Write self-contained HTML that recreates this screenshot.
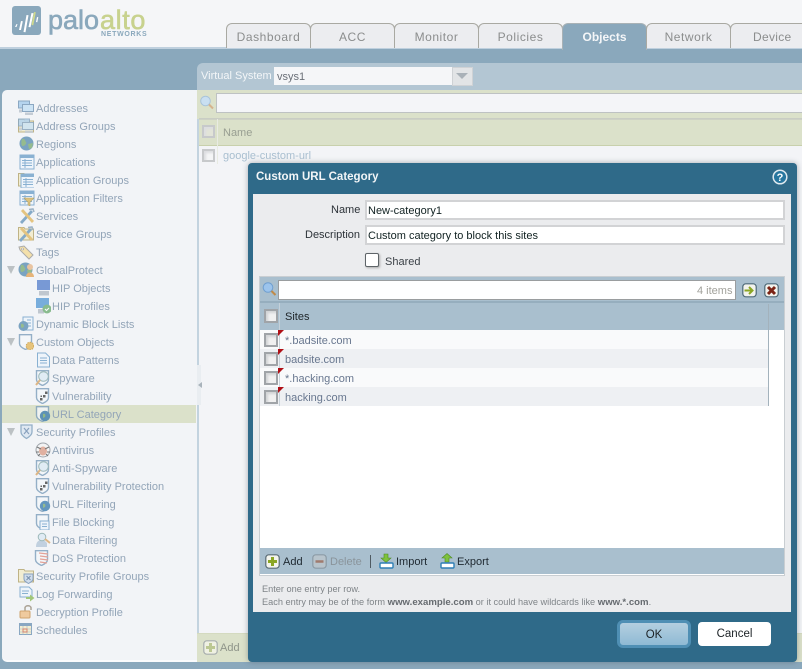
<!DOCTYPE html>
<html><head><meta charset="utf-8"><title>Custom URL Category</title>
<style>
html,body{margin:0;padding:0}
body{width:802px;height:669px;overflow:hidden;position:relative;background:#b2c5d2;font-family:"Liberation Sans",sans-serif;font-size:11px}
div,span,svg{position:absolute;box-sizing:border-box}
b{font-size:9.6px}
.t{white-space:nowrap;line-height:16px}
.tab{top:23px;width:85px;height:25px;background:#ecedf0;border:1px solid #a9a9a2;border-bottom:none;border-radius:6px 6px 0 0;text-align:center;color:#8b8d8d;font-size:12px;letter-spacing:.55px;line-height:27px}
.s{color:#93a5b8;left:36px}
.l2{left:52px}
.i{width:16px;height:16px;opacity:.8}
.cb{width:13px;height:13px;background:#f4f5f6;border:2px solid #c7c9cb;box-shadow:inset 2px 2px 2px #dcdde0}
.cbd{width:14px;height:14px;background:#f0f0f0;border:2px solid #a0a4a8;box-shadow:inset 2px 2px 2px #d2d4d6}
.inp{background:#fff;border:2px solid #d2d3d5;height:20px;left:365px;width:420px;color:#122;padding-left:1px;line-height:19px;font-size:11px}
.row{left:260px;width:508px;height:19px}
.site{left:285px;color:#68778f;font-size:11px}
.flag{left:278px;width:0;height:0;border-top:6px solid #b01016;border-right:6px solid transparent}
</style></head><body>
<svg width="0" height="0" style="position:absolute">
<symbol id="sh" viewBox="0 0 16 16"><path d="M1.500 .7h12v8.800c0 3-3.300 4.800-6 6-2.700-1.200-6-3-6-6z" fill="#f4f7fa" stroke="#7d9fbc" stroke-width="1.400"/></symbol>
<symbol id="folder" viewBox="0 0 16 16"><path d="M.500 14V1.500h5.500l1 1.500h8.500v11z" fill="#f3ecca" stroke="#b3a36a"/></symbol>
<symbol id="pc" viewBox="0 0 16 16"><rect x=".5" y="1" width="11" height="7" fill="#a6cdec" stroke="#7295b5"/><rect x="4.500" y="4.500" width="11" height="7" fill="#c3e0f4" stroke="#7295b5"/><rect x="7" y="12.500" width="8" height="2.500" fill="#b9c3cd"/><rect x="1" y="9.500" width="3" height="3" fill="#b9c3cd"/></symbol>
<symbol id="globe" viewBox="0 0 16 16"><circle cx="7.500" cy="7.500" r="7" fill="#5d8fb4"/><path d="M3 3c3-1 3 2 4 3s-1 4-3 4-2-4-1-7zM9 8l5-1-1 5-3 1z" fill="#7fae74"/></symbol>
<symbol id="table" viewBox="0 0 16 16"><rect x="1" y="1" width="14" height="14" fill="#eef5fb" stroke="#6fa1c9"/><rect x="1" y="1" width="14" height="3" fill="#6fa1c9"/><path d="M3 6.500h10M3 9h10M3 11.500h10M6 5v9" stroke="#6fa1c9" fill="none"/></symbol>
<symbol id="tools" viewBox="0 0 16 16"><path d="M2 15 13 3" stroke="#6b98bd" stroke-width="2.800"/><path d="M3 2l11 12" stroke="#e1b964" stroke-width="2.800"/><path d="M10 1.500l4-.5 1 3" stroke="#88a3ba" fill="none" stroke-width="1.500"/></symbol>
<symbol id="add" viewBox="0 0 15 15"><rect x=".8" y=".8" width="13.400" height="13.400" rx="3" fill="#f3f4ed" stroke="#5c6d76" stroke-width="1.200"/><path d="M7.500 3v9M3 7.500h9" stroke="#8ba624" stroke-width="3"/></symbol>
</svg>

<!-- header -->
<div style="left:0;top:0;width:802px;height:47px;background:#f5f6f8"></div>
<div style="left:0;top:47px;width:802px;height:3px;background:#bfd0de"></div>
<div style="left:0;top:49px;width:802px;height:620px;background:#8aa8bc"></div>
<!-- logo -->
<svg style="left:12px;top:6px" width="29" height="29" viewBox="0 0 29 29"><rect width="29" height="29" rx="3" fill="#8aa8bc"/><path d="M3 21l1.500-3 1 .3L4.500 21zM7 24l2-9 1.800.3L9 24zM11.500 26l3-17 2 .3-3 17zM16.500 21l3-14 2 .3-3 14z" fill="#fff"/><path d="M19.500 19l2.500-13 1.800.3-2.500 13z" fill="#cfd98c"/><path d="M24 16l1-5 1.300.3-1 5z" fill="#fff"/></svg>
<div class="t" style="left:48px;top:6px;font-size:27px;line-height:28px;color:#8aa8bc;-webkit-text-stroke:.6px #8aa8bc">palo</div>
<div class="t" style="left:100px;top:6px;font-size:27px;line-height:28px;color:#c8d28e;letter-spacing:.6px;-webkit-text-stroke:.6px #c8d28e">alto</div>
<div class="t" style="left:101px;top:30px;font-size:7px;font-weight:bold;color:#8aa8bc;letter-spacing:.7px;line-height:10px">NETWORKS</div>
<!-- tabs -->
<div class="tab" style="left:226px">Dashboard</div>
<div class="tab" style="left:310px">ACC</div>
<div class="tab" style="left:394px">Monitor</div>
<div class="tab" style="left:478px">Policies</div>
<div class="tab" style="left:562px;height:27px;background:#8aa8bc;color:#f4f6f8;font-weight:bold;font-size:12px;letter-spacing:0;border-color:#a9b2b6">Objects</div>
<div class="tab" style="left:646px">Network</div>
<div class="tab" style="left:730px;width:80px;text-align:left;padding-left:22px;letter-spacing:.3px">Device</div>

<!-- vsys bar -->
<div style="left:197px;top:63px;width:605px;height:28px;background:#b3c6d3;border-radius:6px 0 0 0"></div>
<div class="t" style="left:201px;top:68px;color:#f3f6f8;font-size:11px">Virtual System</div>
<div style="left:274px;top:67px;width:178px;height:18px;background:#f5f6f8"></div>
<div class="t" style="left:277px;top:69px;color:#6b7078">vsys1</div>
<div style="left:452px;top:67px;width:21px;height:19px;background:#e2e4e6;border:1px solid #cfd2d5"></div>
<div style="left:456px;top:73px;width:0;height:0;border-left:6px solid transparent;border-right:6px solid transparent;border-top:6px solid #a9b1b8"></div>

<!-- sidebar -->
<div style="left:2px;top:90px;width:195px;height:572px;background:#f2f4f7;border-radius:5px 0 0 5px;border-bottom:2px solid #fafbfc"></div>
<div style="left:197px;top:90px;width:2px;height:572px;background:#c3d3df"></div>
<div style="left:2px;top:405px;width:194px;height:18px;background:#dbe1ca"></div>

<svg class="i" style="left:18px;top:100px"><use href="#pc"/></svg><div class="t s" style="top:101px">Addresses</div>
<svg class="i" style="left:18px;top:118px"><use href="#folder"/><use href="#pc" opacity=".85"/></svg><div class="t s" style="top:119px">Address Groups</div>
<svg class="i" style="left:19px;top:136px"><use href="#globe"/></svg><div class="t s" style="top:137px">Regions</div>
<svg class="i" style="left:19px;top:154px"><use href="#table"/></svg><div class="t s" style="top:155px">Applications</div>
<svg class="i" style="left:18px;top:172px"><use href="#folder"/><use href="#table" x="2" y="1"/></svg><div class="t s" style="top:173px">Application Groups</div>
<svg class="i" style="left:19px;top:190px"><use href="#table"/><path d="M5 8h10l-4 4v4l-2-1v-3z" fill="#d8b862" stroke="#a78d45" stroke-width=".6"/></svg><div class="t s" style="top:191px">Application Filters</div>
<svg class="i" style="left:19px;top:208px"><use href="#tools"/></svg><div class="t s" style="top:209px">Services</div>
<svg class="i" style="left:18px;top:226px"><use href="#folder"/><use href="#tools"/></svg><div class="t s" style="top:227px">Service Groups</div>
<svg class="i" style="left:18px;top:244px"><path d="M1 3l5-1 9 9-4 4-9-9z" fill="#f5dc98" stroke="#999" /><circle cx="4.500" cy="5" r="1" fill="#fff" stroke="#888" stroke-width=".6"/></svg><div class="t s" style="top:245px">Tags</div>
<div style="left:7px;top:266px;width:0;height:0;border-left:4.500px solid transparent;border-right:4.500px solid transparent;border-top:8px solid #bcc1c4"></div>
<svg class="i" style="left:18px;top:262px"><use href="#globe"/><circle cx="12" cy="5" r="3" fill="#e8b98c"/><path d="M8 15c0-6 8-6 8 0z" fill="#e4a55a"/></svg><div class="t s" style="top:263px">GlobalProtect</div>
<svg class="i" style="left:36px;top:280px"><rect x="1" y="0" width="13" height="10" fill="#5a83cd"/><rect x="3" y="11" width="10" height="4.500" fill="#b4bcc6"/></svg><div class="t s l2" style="top:281px">HIP Objects</div>
<svg class="i" style="left:35px;top:298px"><rect x="1" y="0" width="13" height="10" fill="#5a9cd6"/><rect x="3" y="11" width="6" height="4.500" fill="#b4bcc6"/><circle cx="12" cy="11" r="4.500" fill="#6fae75"/><path d="M10 11l1.500 1.500L14 10" stroke="#fff" fill="none"/></svg><div class="t s l2" style="top:299px">HIP Profiles</div>
<svg class="i" style="left:18px;top:316px"><rect x="5" y="1" width="10" height="13" fill="#eef5fb" stroke="#6fa1c9"/><path d="M9 4h4M9 7h4M9 10h4" stroke="#6fa1c9"/><circle cx="5.500" cy="10" r="5" fill="#5d8fb4"/><path d="M3 8c2-1 3 1 3 2s-2 3-3 1z" fill="#7fae74"/></svg><div class="t s" style="top:317px">Dynamic Block Lists</div>
<div style="left:7px;top:338px;width:0;height:0;border-left:4.500px solid transparent;border-right:4.500px solid transparent;border-top:8px solid #bcc1c4"></div>
<svg class="i" style="left:18px;top:334px"><use href="#sh"/><circle cx="12" cy="12" r="3.800" fill="#e4b75d" stroke="#c59535" stroke-dasharray="1.500 1"/></svg><div class="t s" style="top:335px">Custom Objects</div>
<svg class="i" style="left:36px;top:352px"><path d="M1.500 1h8l4 4v10h-12z" fill="#eef5fb" stroke="#6fa1c9"/><path d="M4 6h7M4 8.500h7M4 11h7" stroke="#6fa1c9"/></svg><div class="t s l2" style="top:353px">Data Patterns</div>
<svg class="i" style="left:35px;top:370px"><use href="#sh"/><circle cx="8.500" cy="6.500" r="4.800" fill="#dce9f4" stroke="#8aa"/><path d="M5 10 1 15" stroke="#d9a76a" stroke-width="2"/></svg><div class="t s l2" style="top:371px">Spyware</div>
<svg class="i" style="left:35px;top:388px"><use href="#sh"/><path d="M5 10h2.500v2.500H5zM8 7h2.500v2.500H8zM10 3.500h2.500V6H10zM5.500 7.500h1.500V9H5.500z" fill="#444"/></svg><div class="t s l2" style="top:389px">Vulnerability</div>
<svg class="i" style="left:35px;top:406px"><use href="#sh"/><circle cx="10" cy="10" r="5.200" fill="#3f7fb0"/><path d="M8 8c2-1 3 1 2 3l-2 1z" fill="#7fae74"/></svg><div class="t s l2" style="top:407px">URL Category</div>
<div style="left:7px;top:428px;width:0;height:0;border-left:4.500px solid transparent;border-right:4.500px solid transparent;border-top:8px solid #bcc1c4"></div>
<svg class="i" style="left:19px;top:424px"><path d="M2 1h11v7c0 3-3 5-5.500 6.500C5 13 2 11 2 8z" fill="#dbe6f2" stroke="#7d9fbc" stroke-width="1.300"/><path d="M5 4l5 6M10 4l-5 6" stroke="#6f8db0" stroke-width="1.200"/></svg><div class="t s" style="top:425px">Security Profiles</div>
<svg class="i" style="left:35px;top:442px"><circle cx="8" cy="8" r="7" fill="#f2f3f4" stroke="#8b9299"/><ellipse cx="8" cy="9" rx="4" ry="4.500" fill="#dca08b"/><path d="M2 5l4 2M14 5l-4 2M1 10h3M15 10h-3M3 14l2-2M13 14l-2-2" stroke="#555"/></svg><div class="t s l2" style="top:443px">Antivirus</div>
<svg class="i" style="left:35px;top:460px"><use href="#sh"/><circle cx="8.500" cy="6.500" r="4.800" fill="#dce9f4" stroke="#8aa"/><path d="M5 10 1 15" stroke="#d9a76a" stroke-width="2"/></svg><div class="t s l2" style="top:461px">Anti-Spyware</div>
<svg class="i" style="left:35px;top:478px"><use href="#sh"/><path d="M5 10h2.500v2.500H5zM8 7h2.500v2.500H8zM10 3.500h2.500V6H10zM5.500 7.500h1.500V9H5.500z" fill="#444"/></svg><div class="t s l2" style="top:479px">Vulnerability Protection</div>
<svg class="i" style="left:35px;top:496px"><use href="#sh"/><circle cx="10" cy="10" r="5.200" fill="#3f7fb0"/><path d="M8 8c2-1 3 1 2 3l-2 1z" fill="#7fae74"/></svg><div class="t s l2" style="top:497px">URL Filtering</div>
<svg class="i" style="left:35px;top:514px"><use href="#sh"/><rect x="5" y="7" width="9" height="9" fill="#eef5fb" stroke="#6fa1c9"/><path d="M7 10h5M7 12.500h5" stroke="#6fa1c9"/></svg><div class="t s l2" style="top:515px">File Blocking</div>
<svg class="i" style="left:35px;top:532px"><path d="M1 15c0-5 2-6 4-7h4l3 3v4z" fill="#b6c8da"/><circle cx="7" cy="5" r="3.800" fill="#dce9f4" stroke="#8aa"/><path d="M10 7l5 4" stroke="#d9a76a" stroke-width="2"/></svg><div class="t s l2" style="top:533px">Data Filtering</div>
<svg class="i" style="left:34px;top:550px"><use href="#sh"/><path d="M5 3l9 1M6 6l8 1M6 9l8 1M6 12l7 1" stroke="#e08e80" stroke-width="1.200"/></svg><div class="t s l2" style="top:551px">DoS Protection</div>
<svg class="i" style="left:18px;top:568px"><use href="#folder"/><path d="M6 6h9v5c0 2-2 3-4.500 4.500C8 14 6 13 6 11z" fill="#c8d8ea" stroke="#6f8db0"/><path d="M8.500 8l4 4M12.500 8l-4 4" stroke="#5a789c"/></svg><div class="t s" style="top:569px">Security Profile Groups</div>
<svg class="i" style="left:19px;top:586px"><path d="M1 1h9l3 3v7H1z" fill="#eef5fb" stroke="#6fa1c9"/><path d="M3 5h7M3 7.500h6" stroke="#6fa1c9"/><path d="M7 11h4V8.500l4.500 3.500-4.500 3.500V13H7z" fill="#8fbc5c"/></svg><div class="t s" style="top:587px">Log Forwarding</div>
<svg class="i" style="left:19px;top:604px"><path d="M6 7V4c0-3 6-3 6 0v2" fill="none" stroke="#9a8f7e" stroke-width="1.500"/><rect x="1" y="7" width="10" height="7" rx="1" fill="#efc088" stroke="#c78f4d"/></svg><div class="t s" style="top:605px">Decryption Profile</div>
<svg class="i" style="left:19px;top:623px" width="14" height="13"><rect x=".5" y=".5" width="12" height="11" fill="#f4ecc8" stroke="#6f94b5"/><rect x=".5" y=".5" width="12" height="2.500" fill="#6f94b5"/><path d="M.5 6h12M.5 9h12M4 3v9M8 3v9" stroke="#8aa8c0" stroke-width=".6" fill="none"/><rect x="4" y="6" width="4" height="3" fill="#efe7c6" stroke="#d06a50"/></svg><div class="t s" style="top:623px">Schedules</div>

<!-- right panel -->
<div style="left:199px;top:90px;width:603px;height:572px;background:#f3f4f7"></div>
<div style="left:197px;top:365px;width:4px;height:40px;background:#e9edf1"></div>
<div style="left:198px;top:382px;width:0;height:0;border-top:3px solid transparent;border-bottom:3px solid transparent;border-right:4px solid #a9b3bb"></div>
<div style="left:197px;top:90px;width:605px;height:3px;background:#dbe1ca"></div>
<div style="left:197px;top:93px;width:605px;height:26px;background:#dbe1ca"></div>
<div style="left:216px;top:93px;width:586px;height:20px;background:#f4f5f8;border:1px solid #bec2c3;border-right:none"></div>
<svg style="left:199px;top:95px" width="16" height="16"><circle cx="6.500" cy="6" r="4.800" fill="#c9dff1" stroke="#a9c4da"/><path d="M10 9.500l4 4" stroke="#d5b38d" stroke-width="2"/></svg>
<div style="left:199px;top:118px;width:603px;height:2px;background:#c9cdc4"></div>
<div style="left:199px;top:119px;width:603px;height:27px;background:#dbe1ca;border-bottom:1px solid #c8d0ac;border-top:1px solid #ced2c5"></div>
<div style="left:217px;top:119px;width:1px;height:45px;background:#e8ebe2"></div>
<div class="cb" style="left:202px;top:125px;background:#e2e4d8"></div>
<div class="t" style="left:223px;top:125px;color:#989e92">Name</div>
<div class="cb" style="left:202px;top:149px"></div>
<div class="t" style="left:223px;top:148px;color:#a9bfd0">google-custom-url</div>
<div style="left:197px;top:633px;width:605px;height:29px;background:#dbe1ca;border-top:1px solid #d4dac0"></div>
<svg style="left:203px;top:640px" width="15" height="15"><rect x=".8" y=".8" width="13.400" height="13.400" rx="3" fill="#eff1e2" stroke="#a7adae" stroke-width="1.200"/><path d="M7.500 3v9M3 7.500h9" stroke="#bcc892" stroke-width="3"/></svg>
<div class="t" style="left:220px;top:640px;color:#8f958a">Add</div>

<!-- dialog -->
<div style="left:248px;top:163px;width:549px;height:499px;background:#2f6a89;border-radius:4px;box-shadow:0 0 6px rgba(70,80,90,.45)"></div>
<div class="t" style="left:256px;top:169px;color:#f2f5f7;font-weight:bold;font-size:11.5px">Custom URL Category</div>
<svg style="left:772px;top:169px" width="16" height="16"><circle cx="8" cy="8" r="6.800" fill="#27769f" stroke="#dfe9ef" stroke-width="1.500"/><text x="8" y="12" text-anchor="middle" font-size="11" font-weight="bold" fill="#fff" font-family="Liberation Sans">?</text></svg>
<div style="left:253px;top:194px;width:538px;height:418px;background:#ebecee"></div>
<div class="t" style="left:331px;top:202px;color:#2c3238">Name</div>
<div class="inp t" style="top:200px">New-category1</div>
<div class="t" style="left:305px;top:227px;color:#2c3238">Description</div>
<div class="inp t" style="top:225px">Custom category to block this sites</div>
<div style="left:365px;top:253px;width:14px;height:14px;background:#fff;border:1px solid #5e6468;border-radius:2px;box-shadow:1px 1px 2px #aaa"></div>
<div class="t" style="left:385px;top:254px;color:#3c4248">Shared</div>

<!-- grid -->
<div style="left:259px;top:276px;width:526px;height:300px;background:#fff;border:1px solid #c9ced2"></div>
<div style="left:260px;top:277px;width:524px;height:26px;background:#a9bfce;border-bottom:2px solid #96aebe"></div>
<svg style="left:262px;top:282px" width="16" height="16"><circle cx="6" cy="5.500" r="4.800" fill="#9cc4ec" stroke="#6f9fd0"/><path d="M9.500 9l4 4" stroke="#c08a48" stroke-width="2"/></svg>
<div style="left:278px;top:280px;width:458px;height:20px;background:#fff;border:1px solid #9a9d9f"></div>
<div class="t" style="left:697px;top:283px;color:#a1a19b">4 items</div>
<svg style="left:742px;top:283px" width="15" height="15"><rect x=".8" y=".8" width="13.400" height="13" rx="3" fill="#f2f3ed" stroke="#4e6a78" stroke-width="1.200"/><path d="M2.500 7.500h7M7 4l3.500 3.500L7 11" stroke="#8ba624" stroke-width="2" fill="none"/></svg>
<svg style="left:764px;top:283px" width="15" height="15"><rect x=".8" y=".8" width="13.400" height="13" rx="3" fill="#f2f3ed" stroke="#4e6a78" stroke-width="1.200"/><path d="M4 4l7 7M11 4l-7 7" stroke="#7c2415" stroke-width="3"/></svg>

<div style="left:260px;top:303px;width:524px;height:27px;background:#a9bfce"></div>
<div style="left:279px;top:303px;width:1px;height:103px;background:#c4d0d9"></div>
<div class="cbd" style="left:264px;top:309px"></div>
<div class="t" style="left:285px;top:309px;color:#1d2428">Sites</div>

<div class="row" style="top:330px;background:#f9fafb"></div>
<div class="row" style="top:349px;background:#eef0f3"></div>
<div class="row" style="top:368px;background:#f9fafb"></div>
<div class="row" style="top:387px;background:#eef0f3"></div>
<div style="left:279px;top:330px;width:1px;height:76px;background:#c9d3da"></div>
<div style="left:768px;top:304px;width:1px;height:102px;background:#a3b2bc"></div>
<div class="cbd" style="left:264px;top:333px"></div><div class="flag" style="top:330px"></div><div class="t site" style="top:333px">*.badsite.com</div>
<div class="cbd" style="left:264px;top:352px"></div><div class="flag" style="top:349px"></div><div class="t site" style="top:352px">badsite.com</div>
<div class="cbd" style="left:264px;top:371px"></div><div class="flag" style="top:368px"></div><div class="t site" style="top:371px">*.hacking.com</div>
<div class="cbd" style="left:264px;top:390px"></div><div class="flag" style="top:387px"></div><div class="t site" style="top:390px">hacking.com</div>

<div style="left:260px;top:548px;width:524px;height:26px;background:#a9bfce"></div>
<svg style="left:265px;top:554px" width="15" height="15"><use href="#add"/></svg>
<div class="t" style="left:283px;top:554px;color:#1e2830">Add</div>
<svg style="left:312px;top:554px" width="15" height="15"><rect x=".8" y=".8" width="13.400" height="13.400" rx="3" fill="#b8c4cc" stroke="#8c9ba6" stroke-width="1.200"/><path d="M3.500 7.500h8" stroke="#a07b6e" stroke-width="2.500"/></svg>
<div class="t" style="left:330px;top:554px;color:#8a949b">Delete</div>
<div style="left:370px;top:555px;width:1px;height:13px;background:#4f5a62"></div>
<svg style="left:379px;top:553px" width="15" height="16"><path d="M5 1h4v4h3L7 9.500 2 5h3z" fill="#7fc23c" stroke="#4d8a20" stroke-width=".6"/><rect x="1" y="10" width="13" height="5" rx="1" fill="#fff" stroke="#2f7fb5" stroke-width="1.400"/></svg>
<div class="t" style="left:396px;top:554px;color:#1e2830">Import</div>
<svg style="left:440px;top:553px" width="15" height="16"><path d="M7 .5 12 5H9v4H5V5H2z" fill="#7fc23c" stroke="#4d8a20" stroke-width=".6"/><rect x="1" y="10" width="13" height="5" rx="1" fill="#fff" stroke="#2f7fb5" stroke-width="1.400"/></svg>
<div class="t" style="left:457px;top:554px;color:#1e2830">Export</div>

<div class="t" style="left:262px;top:581px;color:#7f8488;font-size:9.2px">Enter one entry per row.</div>
<div class="t" style="left:262px;top:594px;color:#7f8488;font-size:9.2px">Each entry may be of the form <b style="color:#666b70">www.example.com</b> or it could have wildcards like <b style="color:#666b70">www.*.com</b>.</div>

<div style="left:617px;top:620px;width:74px;height:28px;border-radius:6px;background:linear-gradient(#b4cfe0,#8fbad4);border:3px solid #4f8fb4;color:#1c2226;text-align:center;line-height:24px;font-size:11.5px">OK</div>
<div style="left:698px;top:622px;width:73px;height:24px;border-radius:4px;background:#fff;color:#1c2226;text-align:center;line-height:24px;font-size:11.5px">Cancel</div>
</body></html>
